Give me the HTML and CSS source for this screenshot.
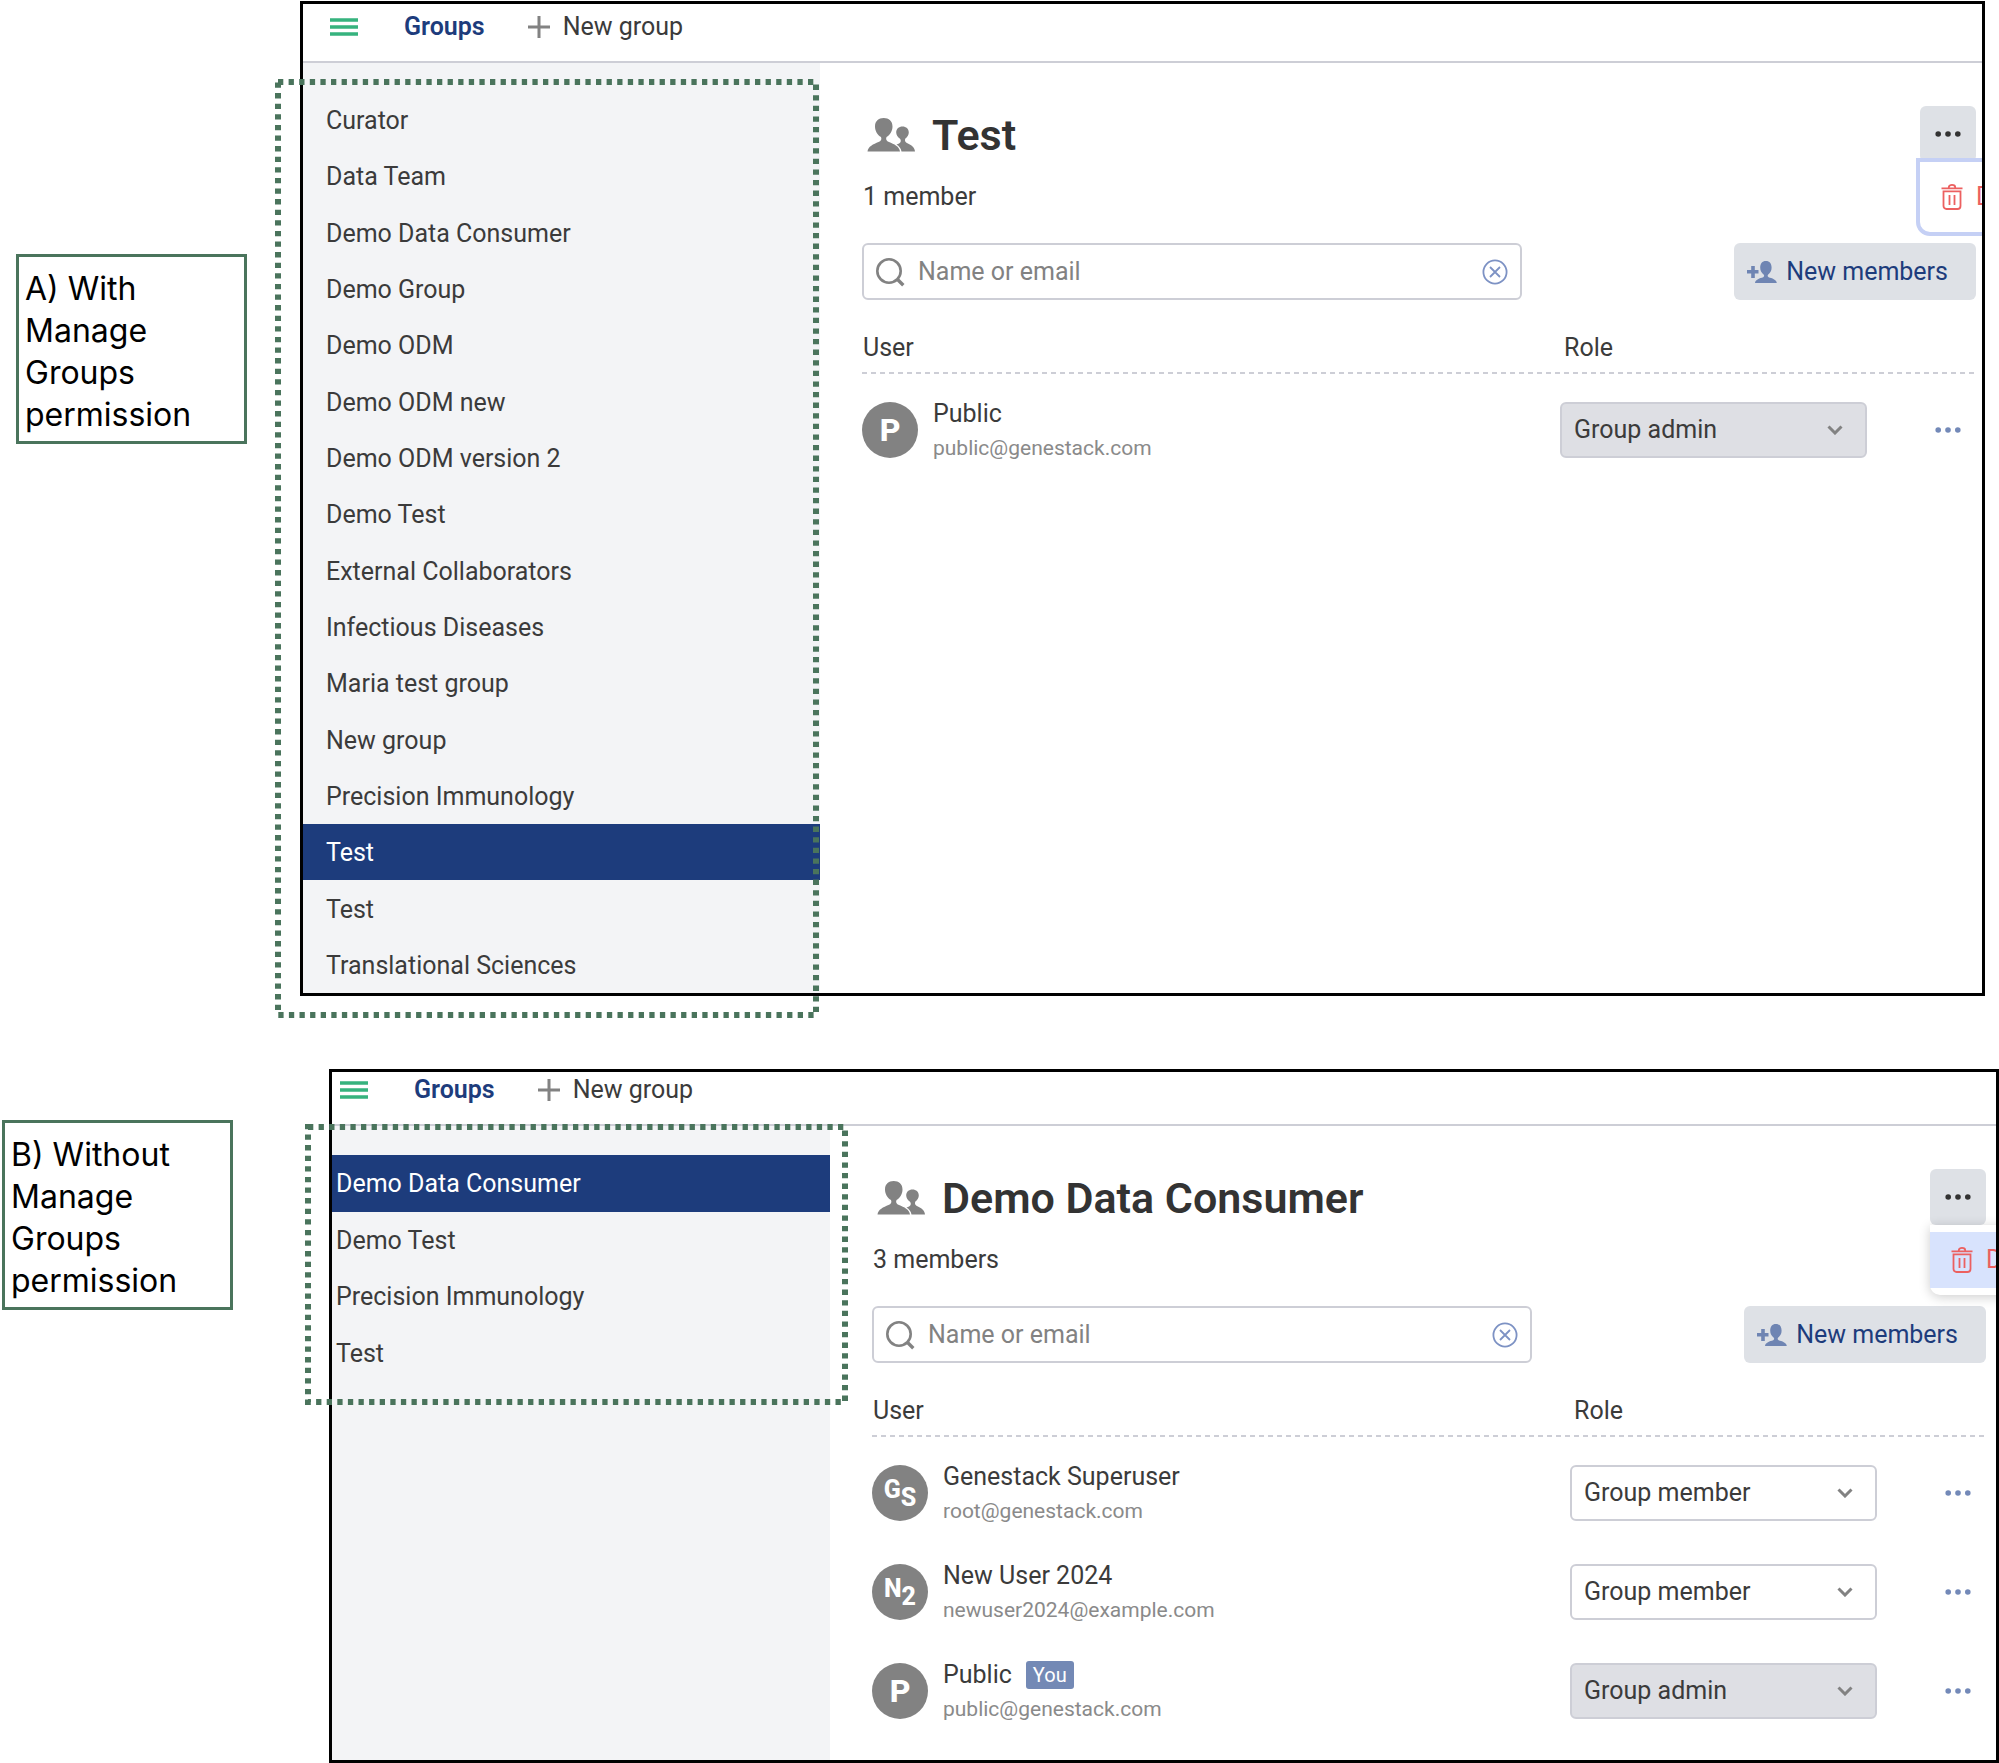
FILE: index.html
```html
<!DOCTYPE html>
<html lang="en">
<head>
<meta charset="utf-8">
<meta name="viewport" content="width=device-width, initial-scale=1">
<title>Groups: with and without Manage Groups permission</title>
<link rel="stylesheet" href="styles.css">
</head>
<body>
<svg class="sprite" aria-hidden="true">
  <symbol id="i-menu" viewBox="0 0 28 18"><path d="M0 2h28M0 9h28M0 16h28" stroke="#36b37e" stroke-width="3.6"/></symbol>
  <symbol id="i-plus" viewBox="0 0 22 22"><path d="M11 0v22M0 11h22" stroke="#828282" stroke-width="3"/></symbol>
  <symbol id="i-users" viewBox="0 0 56 56"><g fill="#828282"><path d="M5.500 45.500c.5-5 6-7.500 11-9.500 2.500-1 3.500-2.500 2.500-5-3.500-2-6-6-6-10.500 0-5.500 3.500-8.500 8.700-8.500s8.800 3 8.800 8.500c0 4.500-2.500 8.500-6 10.500-1 2.500 0 4 2.500 5 5 2 10.500 4.500 11 9.500z"/><path d="M34.500 38.500c2-.8 4.300-1.300 4.300-3.500 0-1-.3-1.700-.8-2.200-2.200-1.500-3.800-4-3.800-6.300 0-3.700 2.700-6 6.300-6s6.300 2.300 6.300 6c0 2.500-1.600 5-3.600 6.300-.8 2 .3 3.700 2.200 4.500 4 1.700 7.300 4 7.600 8.200H39.500c-.5-3-2.500-5.500-5-7z"/></g></symbol>
  <symbol id="i-search" viewBox="0 0 30 30"><g fill="none" stroke="#828282" stroke-width="2.600"><circle cx="13" cy="14" r="11.700"/><path d="M21.300 22.300l6 6" stroke-width="3.400"/></g></symbol>
  <symbol id="i-clear" viewBox="0 0 26 26"><g fill="none" stroke="#7d92c4" stroke-width="1.800"><circle cx="13" cy="13" r="11.600"/><path d="M8 8l10 10M18 8L8 18"/></g></symbol>
  <symbol id="i-add-user" viewBox="0 0 30 24"><g fill="#6f85b3"><path d="M0 10h4.200V6h3.600v4h3.700v3.600H7.800V18H4.200v-4.400H0z"/><path d="M8 23c.3-3.500 5-4.800 8.200-5.800 1.200-.7 1.200-1.700.4-2.700-1.800-1.500-3.400-3.500-3.400-6.700C13.200 3.500 15.200 1 18.900 1s5.700 2.500 5.700 6.800c0 3.200-1.600 5.200-3.400 6.700-.8 1-.8 2 .4 2.700 3.200 1 7.900 2.300 8.200 5.800z"/></g></symbol>
  <symbol id="i-dots" viewBox="0 0 26 8"><g fill="currentColor"><circle cx="3.200" cy="4" r="2.800"/><circle cx="13" cy="4" r="2.800"/><circle cx="22.800" cy="4" r="2.800"/></g></symbol>
  <symbol id="i-trash" viewBox="0 0 22 28"><g fill="none" stroke="#ec6060" stroke-width="1.800"><path d="M.5 5.300h21M7.800 5V4.200c0-3.200 6.400-3.200 6.400 0V5M2.500 8.300h17V23a3 3 0 0 1-3 3h-11a3 3 0 0 1-3-3zM8.500 12v10M13.500 12v10"/></g></symbol>
  <symbol id="i-chevron" viewBox="0 0 16 10"><path d="M1.500 1.500L8 8l6.500-6.500" fill="none" stroke="#828282" stroke-width="3"/></symbol>
</svg>

<main class="comparison">
  <section class="case case-a">
    <h2 class="note">A) With Manage Groups permission</h2>
    <div class="shot">
      <div class="frame">
        <header class="topbar">
          <button class="bare" type="button" aria-label="Menu"><svg class="ic-menu"><use href="#i-menu"/></svg></button>
          <a class="crumb" href="#groups">Groups</a>
          <button class="bare new-group" type="button"><svg class="ic-plus"><use href="#i-plus"/></svg>New group</button>
        </header>
        <div class="body">
          <nav class="sidebar" aria-label="All groups">
            <ul class="group-list">
              <li><a href="#g">Curator</a></li>
              <li><a href="#g">Data Team</a></li>
              <li><a href="#g">Demo Data Consumer</a></li>
              <li><a href="#g">Demo Group</a></li>
              <li><a href="#g">Demo ODM</a></li>
              <li><a href="#g">Demo ODM new</a></li>
              <li><a href="#g">Demo ODM version 2</a></li>
              <li><a href="#g">Demo Test</a></li>
              <li><a href="#g">External Collaborators</a></li>
              <li><a href="#g">Infectious Diseases</a></li>
              <li><a href="#g">Maria test group</a></li>
              <li><a href="#g">New group</a></li>
              <li><a href="#g">Precision Immunology</a></li>
              <li><a class="selected" href="#g" aria-current="page">Test</a></li>
              <li><a href="#g">Test</a></li>
              <li><a href="#g">Translational Sciences</a></li>
            </ul>
          </nav>
          <div class="content">
            <div class="title-row">
              <svg class="ic-users"><use href="#i-users"/></svg>
              <h1>Test</h1>
              <div class="more">
                <button class="more-button" type="button" aria-label="Group actions"><svg class="ic-dots"><use href="#i-dots"/></svg></button>
                <div class="menu menu-focused">
                  <button class="menu-item" type="button"><svg class="ic-trash"><use href="#i-trash"/></svg>Delete</button>
                </div>
              </div>
            </div>
            <p class="count">1 member</p>
            <div class="tools">
              <div class="search">
                <svg class="ic-search"><use href="#i-search"/></svg>
                <input type="text" placeholder="Name or email" aria-label="Name or email">
                <button class="bare" type="button" aria-label="Clear"><svg class="ic-clear"><use href="#i-clear"/></svg></button>
              </div>
              <button class="new-members" type="button"><svg class="ic-add-user"><use href="#i-add-user"/></svg>New members</button>
            </div>
            <table class="members">
              <thead><tr><th class="col-user">User</th><th class="col-role">Role</th><th class="col-actions"></th></tr></thead>
              <tbody>
                <tr>
                  <td><div class="user"><span class="avatar">P</span><div><div class="name">Public</div><div class="email">public@genestack.com</div></div></div></td>
                  <td><div class="role"><select aria-label="Role of Public" disabled><option>Group admin</option></select><svg class="ic-chevron"><use href="#i-chevron"/></svg></div></td>
                  <td><button class="row-more" type="button" aria-label="Member actions"><svg class="ic-dots"><use href="#i-dots"/></svg></button></td>
                </tr>
              </tbody>
            </table>
          </div>
        </div>
      </div>
      <svg class="highlight" aria-hidden="true"><rect width="100%" height="100%"/></svg>
    </div>
  </section>

  <section class="case case-b">
    <h2 class="note">B) Without Manage Groups permission</h2>
    <div class="shot">
      <div class="frame">
        <header class="topbar">
          <button class="bare" type="button" aria-label="Menu"><svg class="ic-menu"><use href="#i-menu"/></svg></button>
          <a class="crumb" href="#groups">Groups</a>
          <button class="bare new-group" type="button"><svg class="ic-plus"><use href="#i-plus"/></svg>New group</button>
        </header>
        <div class="body">
          <nav class="sidebar" aria-label="My groups">
            <ul class="group-list">
              <li><a class="selected" href="#g" aria-current="page">Demo Data Consumer</a></li>
              <li><a href="#g">Demo Test</a></li>
              <li><a href="#g">Precision Immunology</a></li>
              <li><a href="#g">Test</a></li>
            </ul>
          </nav>
          <div class="content">
            <div class="title-row">
              <svg class="ic-users"><use href="#i-users"/></svg>
              <h1>Demo Data Consumer</h1>
              <div class="more">
                <button class="more-button" type="button" aria-label="Group actions"><svg class="ic-dots"><use href="#i-dots"/></svg></button>
                <div class="menu menu-hovered">
                  <button class="menu-item" type="button"><svg class="ic-trash"><use href="#i-trash"/></svg>Delete</button>
                </div>
              </div>
            </div>
            <p class="count">3 members</p>
            <div class="tools">
              <div class="search">
                <svg class="ic-search"><use href="#i-search"/></svg>
                <input type="text" placeholder="Name or email" aria-label="Name or email">
                <button class="bare" type="button" aria-label="Clear"><svg class="ic-clear"><use href="#i-clear"/></svg></button>
              </div>
              <button class="new-members" type="button"><svg class="ic-add-user"><use href="#i-add-user"/></svg>New members</button>
            </div>
            <table class="members">
              <thead><tr><th class="col-user">User</th><th class="col-role">Role</th><th class="col-actions"></th></tr></thead>
              <tbody>
                <tr>
                  <td><div class="user"><span class="avatar pair"><span>G</span><span>S</span></span><div><div class="name">Genestack Superuser</div><div class="email">root@genestack.com</div></div></div></td>
                  <td><div class="role"><select aria-label="Role of Genestack Superuser"><option>Group member</option></select><svg class="ic-chevron"><use href="#i-chevron"/></svg></div></td>
                  <td><button class="row-more" type="button" aria-label="Member actions"><svg class="ic-dots"><use href="#i-dots"/></svg></button></td>
                </tr>
                <tr>
                  <td><div class="user"><span class="avatar pair"><span>N</span><span>2</span></span><div><div class="name">New User 2024</div><div class="email">newuser2024@example.com</div></div></div></td>
                  <td><div class="role"><select aria-label="Role of New User 2024"><option>Group member</option></select><svg class="ic-chevron"><use href="#i-chevron"/></svg></div></td>
                  <td><button class="row-more" type="button" aria-label="Member actions"><svg class="ic-dots"><use href="#i-dots"/></svg></button></td>
                </tr>
                <tr>
                  <td><div class="user"><span class="avatar">P</span><div><div class="name">Public <span class="you">You</span></div><div class="email">public@genestack.com</div></div></div></td>
                  <td><div class="role"><select aria-label="Role of Public" disabled><option>Group admin</option></select><svg class="ic-chevron"><use href="#i-chevron"/></svg></div></td>
                  <td><button class="row-more" type="button" aria-label="Member actions"><svg class="ic-dots"><use href="#i-dots"/></svg></button></td>
                </tr>
              </tbody>
            </table>
          </div>
        </div>
      </div>
      <svg class="highlight" aria-hidden="true"><rect width="100%" height="100%"/></svg>
    </div>
  </section>
</main>
</body>
</html>
```
FILE: styles.css
```css
:root {
  --navy: #1d3c7c;
  --text: #3b3b3b;
  --muted: #828282;
  --line: #cdced6;
  --note-green: #4a745c;
}

* { box-sizing: border-box; }

body {
  margin: 0;
  background: #fff;
  color: var(--text);
  font: 25px/32px Roboto, "Liberation Sans", sans-serif;
}

h1, h2, p, ul { margin: 0; padding: 0; }
ul { list-style: none; }
a { color: inherit; text-decoration: none; }
button, input, select { font: inherit; color: inherit; }
button { cursor: pointer; }
svg { display: block; flex: none; }
.sprite { position: absolute; width: 0; height: 0; }

.bare {
  display: flex;
  align-items: center;
  padding: 0;
  border: 0;
  background: none;
}

.comparison {
  display: flex;
  flex-direction: column;
  gap: 73px;
  padding-top: 1px;
}

.case {
  display: flex;
  align-items: flex-start;
}
.case-a { gap: 53px; padding: 0 14px 0 16px; }
.case-b { gap: 96px; padding-left: 2px; }

.note {
  flex: none;
  width: 231px;
  padding: 11px 6px 5px;
  border: 3px solid var(--note-green);
  color: #000;
  font: 400 32px/42px Inter, sans-serif;
}
.case-a .note { margin-top: 253px; }
.case-b .note { margin-top: 51px; }

.shot {
  position: relative;
  flex: 1;
  min-width: 0;
}
.frame {
  overflow: hidden;
  border: 3px solid #000;
}

/* Dotted callout laid over the sidebar */
.highlight {
  position: absolute;
  overflow: visible;
  pointer-events: none;
}
.highlight rect {
  fill: none;
  stroke: var(--note-green);
  stroke-width: 6px;
  stroke-dasharray: 5.300 5.300;
}
.case-a .highlight { left: -22px; top: 81px; width: 538px; height: 933px; }
.case-b .highlight { left: -21px; top: 58px; width: 537px; height: 275px; }

.topbar {
  display: flex;
  align-items: flex-start;
  border-bottom: 2px solid var(--line);
}
.case-a .topbar { padding: 7px 27px 18px; }
.case-b .topbar { padding: 2px 8px 18px; }
.topbar .bare { height: 32px; }
.crumb {
  margin: 0 43px 0 46px;
  color: var(--navy);
  font-weight: 600;
}
.new-group { gap: 13px; }

.body { display: flex; }
.sidebar { flex: none; background: #f3f4f6; }
.case-a .sidebar { width: 517px; padding-top: 29px; }
.case-b .sidebar { width: 498px; padding-top: 29px; }

.group-list {
  display: grid;
  grid-auto-rows: 1fr;
}
.case-a .group-list { min-height: 901px; }
.case-b .group-list { min-height: 226px; }
.group-list a {
  display: flex;
  align-items: center;
  height: 100%;
  padding-top: 2px;
}
.case-a .group-list a { padding-left: 23px; }
.case-b .group-list a { padding-left: 4px; }
.group-list .selected { background: var(--navy); color: #fff; }

.content {
  flex: 1;
  min-width: 0;
  padding: 43px 6px 26px 42px;
}
.case-b .content { padding-right: 10px; }

.title-row {
  display: flex;
  align-items: center;
  gap: 14px;
}
h1 {
  flex: 1;
  padding-top: 2px;
  color: #333;
  font-size: 43px;
  line-height: 54px;
  font-weight: 600;
}

.more { position: relative; }
.more-button, .row-more {
  display: flex;
  align-items: center;
  justify-content: center;
  width: 56px;
  height: 56px;
  padding: 0;
  border: 0;
}
.more-button { border-radius: 6px; background: #dee1e6; color: #333; }
.row-more { background: none; color: #7389b8; }

.menu {
  position: absolute;
  width: 180px;
  background: #fff;
}
.menu-focused {
  left: -4px;
  top: 52px;
  padding: 7px 0;
  border: 4px solid #c5d0f5;
  border-radius: 0 0 14px 14px;
}
.menu-hovered {
  left: 0;
  top: 56px;
  padding: 7px 0;
  border-radius: 0 0 10px 10px;
  box-shadow: 0 2px 12px rgba(0, 0, 0, 0.2);
}
.menu-item {
  display: flex;
  align-items: center;
  gap: 13px;
  width: 100%;
  height: 56px;
  padding: 0 21px;
  border: 0;
  background: none;
  color: #ec6060;
}
.menu-hovered .menu-item { background: #d8e3fd; }

.count { padding: 19px 0 30px 1px; }

.tools {
  display: flex;
  justify-content: space-between;
  gap: 24px;
}
.search {
  display: flex;
  align-items: center;
  flex: 0 1 660px;
  min-width: 0;
  height: 57px;
  padding: 0 12px;
  border: 2px solid var(--line);
  border-radius: 6px;
}
.search input {
  flex: 1;
  min-width: 0;
  height: 100%;
  padding: 0 12px;
  border: 0;
  outline: 0;
  background: none;
}
.search input::placeholder { color: var(--muted); opacity: 1; }

.new-members {
  display: flex;
  align-items: center;
  justify-content: space-between;
  width: 242px;
  height: 57px;
  padding: 1px 28px 0 13px;
  border: 0;
  border-radius: 6px;
  background: #dee1e6;
  color: var(--navy);
}

.members {
  width: 100%;
  margin-top: 32px;
  border-collapse: collapse;
  table-layout: fixed;
}
/* One dashed rule across all columns */
.members thead tr {
  background: repeating-linear-gradient(90deg, var(--line) 0 5px, transparent 5px 9px) left bottom / 100% 2px no-repeat;
}
.members th {
  padding: 0 0 10px 1px;
  font-weight: 400;
  text-align: left;
}
.members .col-role { width: 360px; padding-left: 4px; }
.members .col-actions { width: 56px; }
.members td { padding: 28px 0 15px; }

.user { display: flex; align-items: center; gap: 15px; height: 56px; }
.avatar {
  display: flex;
  align-items: center;
  justify-content: center;
  flex: none;
  width: 56px;
  height: 56px;
  border-radius: 50%;
  background: var(--muted);
  color: #fff;
  font-size: 32px;
  font-weight: 800;
}
.pair { font-size: 25px; }
.pair span:first-child { padding-bottom: 6px; }
.pair span:last-child { padding-top: 10px; }
.name { display: flex; align-items: center; gap: 14px; height: 34px; padding-top: 2px; }
.email { height: 34px; line-height: 36px; color: #8a8a8a; font-size: 21px; }
.you {
  height: 28px;
  padding: 0 7px;
  border-radius: 3px;
  background: #7389b5;
  color: #fff;
  font-size: 20px;
  line-height: 28px;
}

.role {
  display: grid;
  align-items: center;
  width: 307px;
}
.role select, .role svg { grid-area: 1 / 1; }
.role svg { justify-self: end; margin-right: 24px; pointer-events: none; }
.role select {
  appearance: none;
  width: 100%;
  height: 56px;
  padding: 0 48px 0 12px;
  border: 2px solid var(--line);
  border-radius: 6px;
  background: #fff;
  opacity: 1;
}
.role select:disabled { background: #dedfe4; color: var(--text); }

.ic-menu { width: 28px; height: 18px; }
.ic-plus { width: 22px; height: 22px; }
.ic-users { width: 56px; height: 56px; }
.ic-search { width: 30px; height: 30px; }
.ic-clear { width: 26px; height: 26px; }
.ic-add-user { width: 30px; height: 24px; }
.ic-dots { width: 26px; height: 8px; }
.ic-trash { width: 22px; height: 28px; }
.ic-chevron { width: 16px; height: 10px; }
```
